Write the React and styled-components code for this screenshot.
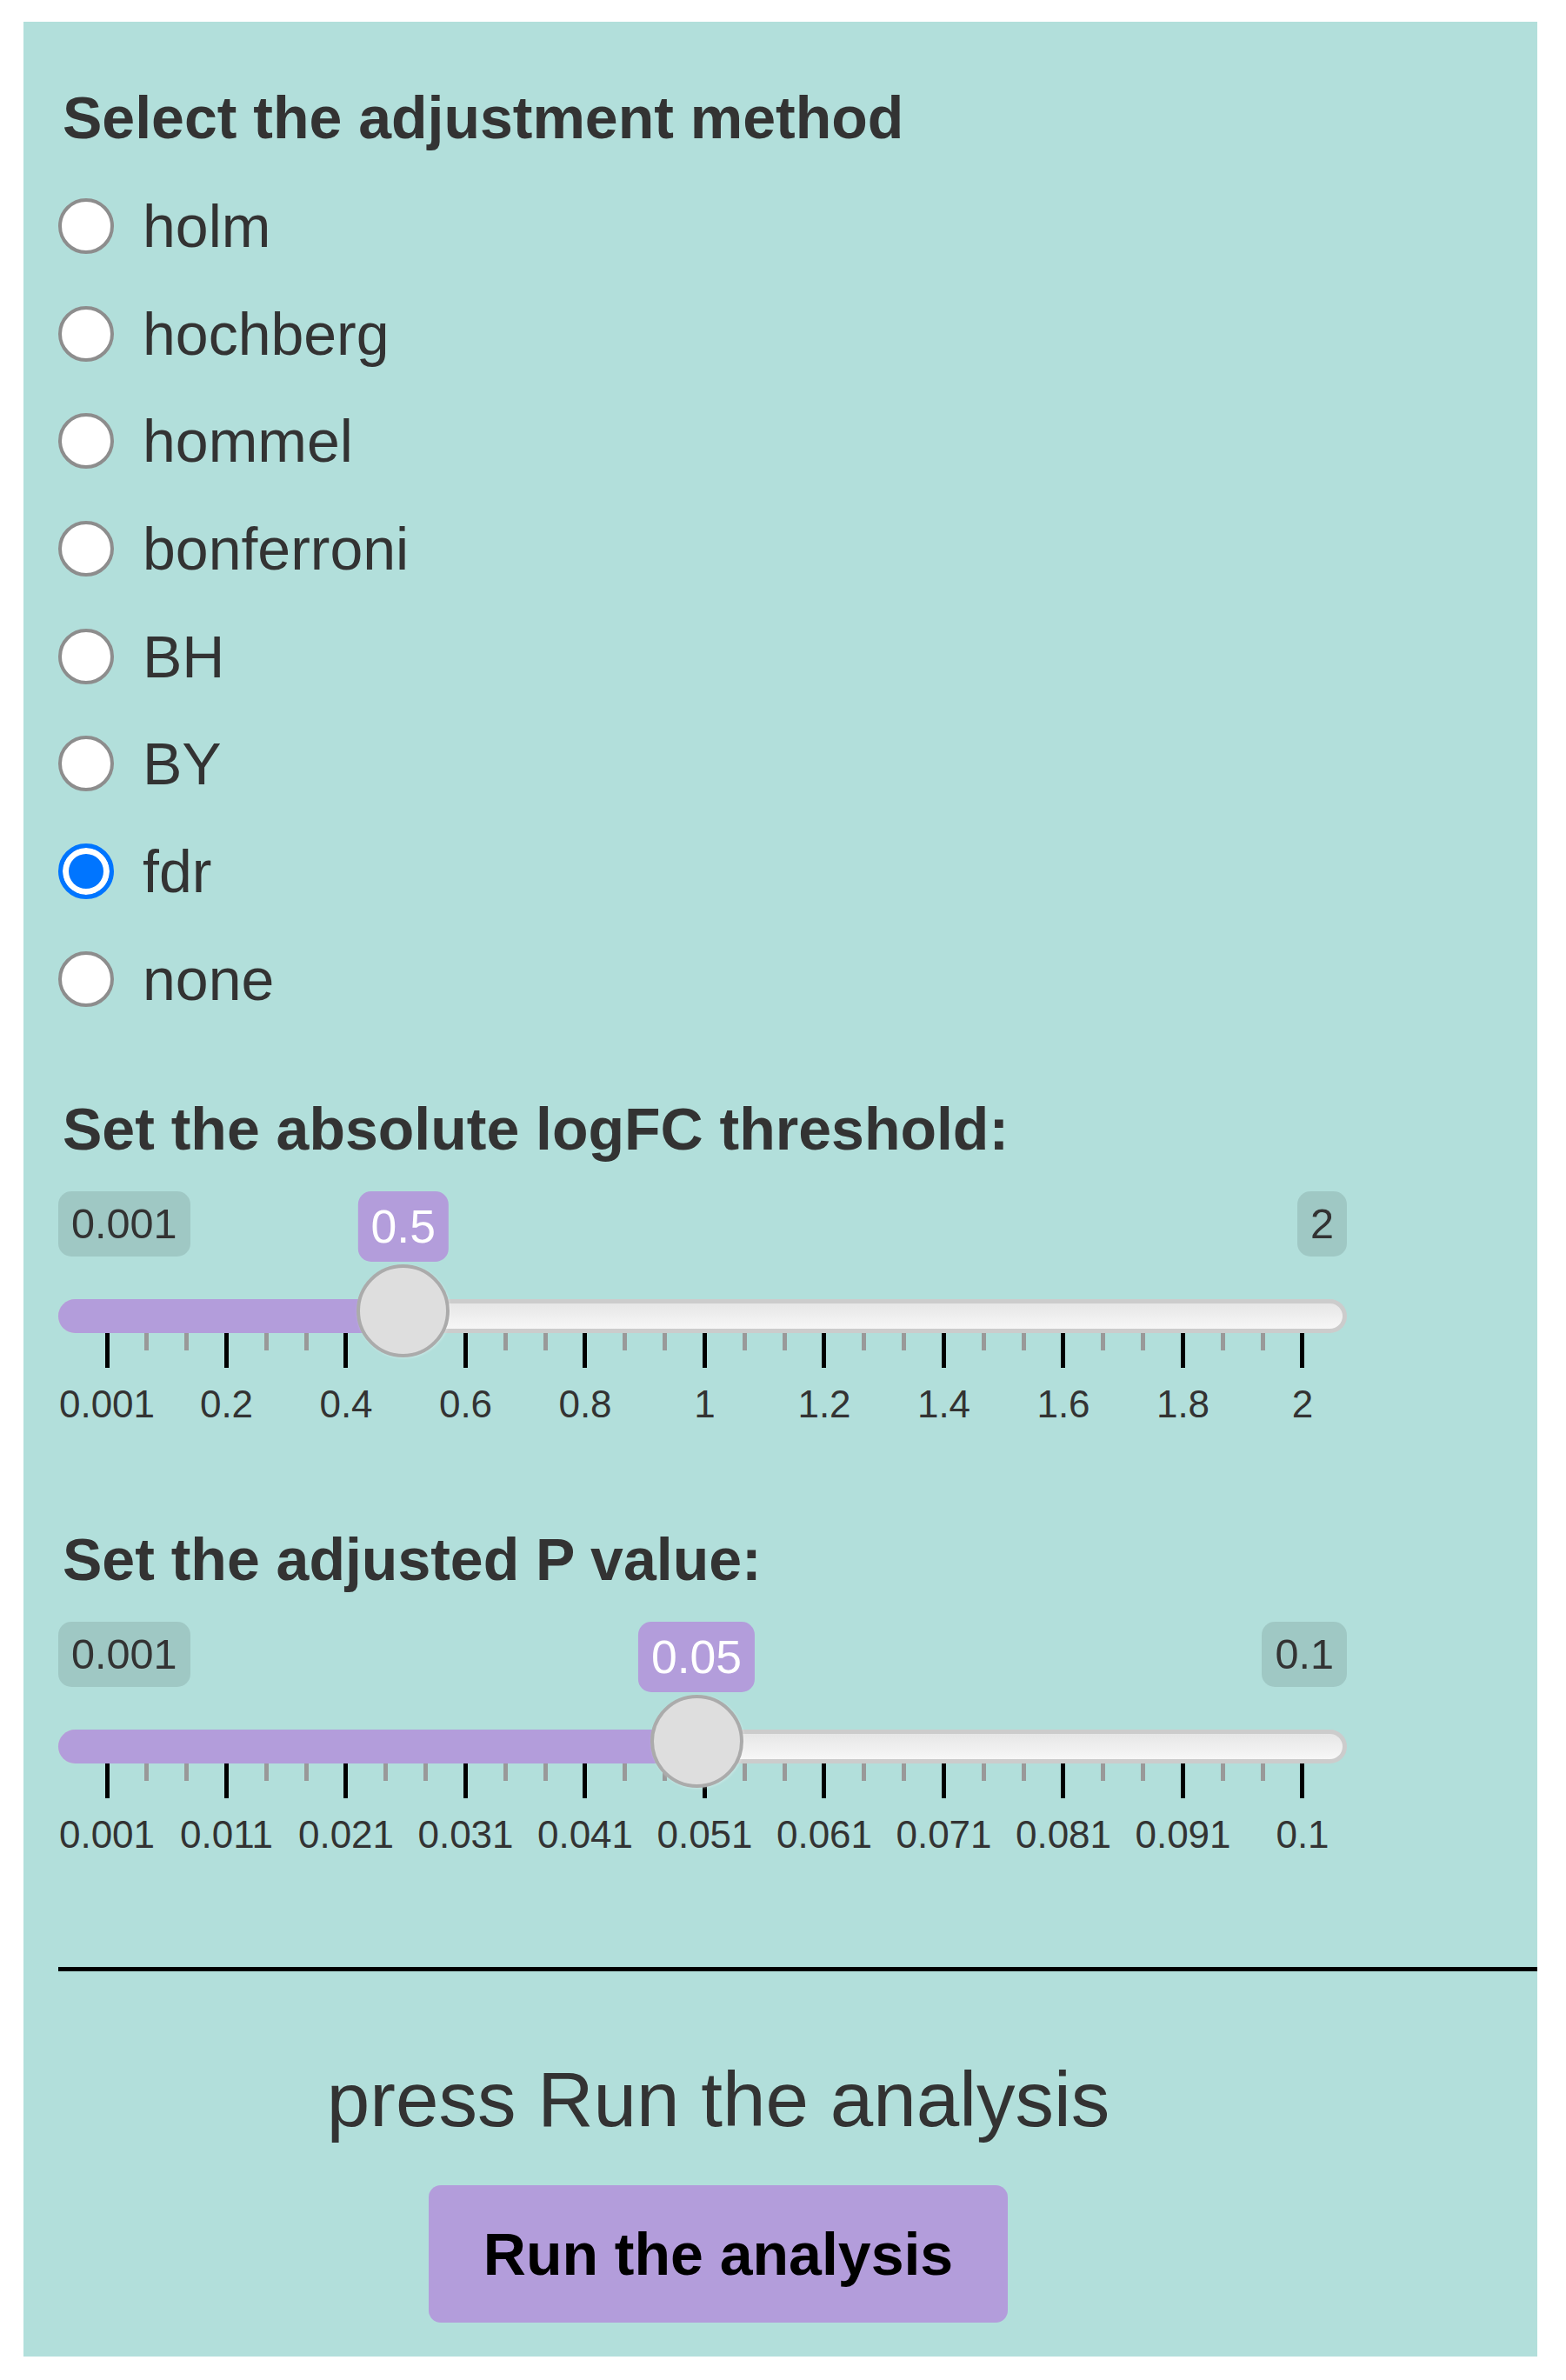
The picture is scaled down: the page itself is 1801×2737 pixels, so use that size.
import React from 'react'
import styled, { createGlobalStyle } from 'styled-components'

const GlobalStyle = createGlobalStyle`
	html, body {
		margin: 0;
		padding: 0;
		background: #fff;
	}
	body {
		font-family: 'Liberation Sans', Arial, Helvetica, sans-serif;
		color: #333;
	}
`

const Panel = styled.div`
	box-sizing: border-box;
	width: 1741px;
	min-height: 2685px;
	margin: 25px 0 0 27px;
	padding: 70px 0 39px 40px;
	background: #b2dfdb;
	display: flex;
	flex-direction: column;
`

const Heading = styled.div`
	margin: ${(p) => p.$top || 0}px 0 0 5px;
	font-size: 68px;
	line-height: 80px;
	font-weight: 700;
	color: #333;
`

const RadioList = styled.div`
	margin-top: 23px;
	display: flex;
	flex-direction: column;
`

const RadioRow = styled.label`
	display: flex;
	align-items: center;
	height: 123.7px;
	font-size: 68px;
	line-height: 124px;
	color: #333;
`

const RadioMark = styled.input`
	appearance: none;
	box-sizing: border-box;
	flex: none;
	width: 64px;
	height: 64px;
	margin: 0 33px 0 0;
	border-radius: 50%;
	border: ${(p) => (p.checked ? '5px solid #0075ff' : '4px solid #8d8d8d')};
	background: ${(p) => (p.checked ? '#0075ff' : '#fff')};
	box-shadow: ${(p) => (p.checked ? 'inset 0 0 0 7px #fff' : 'none')};
`

/* ---- slider (ion.rangeSlider look) ---- */

const SliderBox = styled.div`
	box-sizing: border-box;
	width: 1482px;
	height: 292px;
	margin-top: 32.5px;
	display: flex;
	flex-direction: column;
`

const TagRow = styled.div`
	position: relative;
	height: 81px;
	display: flex;
	justify-content: space-between;
	align-items: flex-start;
`

const EdgeTag = styled.span`
	padding: 5px 15px;
	border-radius: 15px;
	background: rgba(0, 0, 0, 0.1);
	font-size: 48.6px;
	line-height: 1.333;
	color: #333;
	white-space: nowrap;
`

const ValueTag = styled.span`
	position: absolute;
	top: 0;
	transform: translateX(-50%);
	padding: 5px 15px;
	border-radius: 15px;
	background: #b39ddb;
	color: #fff;
	font-size: 53.5px;
	line-height: 1.333;
	white-space: nowrap;
`

const TrackArea = styled.div`
	position: relative;
	padding-top: 43px;
`

const Track = styled.div`
	position: relative;
	height: 39px;
	box-sizing: border-box;
	border: 5px solid #ccc;
	border-radius: 20px;
	background: linear-gradient(to bottom, #dedede -50%, #fff 150%);
`

const Fill = styled.div`
	position: absolute;
	top: -5px;
	left: -5px;
	height: 39px;
	background: #b39ddb;
	border-radius: 20px 0 0 20px;
`

const Knob = styled.div`
	position: absolute;
	top: 3px;
	z-index: 2;
	width: 107px;
	height: 107px;
	box-sizing: border-box;
	border: 4px solid #ababab;
	border-radius: 50%;
	background: #dedede;
	box-shadow: 1px 1px 3px rgba(255, 255, 255, 0.3);
`

const TickRow = styled.div`
	height: 40px;
	padding: 0 48.5px 0 53.5px;
	display: flex;
	justify-content: space-between;
	align-items: flex-start;
`

const Tick = styled.span`
	flex: none;
	width: 5px;
	height: ${(p) => (p.$big ? 40 : 20)}px;
	background: ${(p) => (p.$big ? '#000' : '#999')};
`

const LabelRow = styled.div`
	margin: 20px 0 0 -12.75px;
	display: grid;
	grid-template-columns: repeat(11, 137.5px);
`

const TickLabel = styled.span`
	text-align: center;
	font-size: 44px;
	line-height: 44px;
	color: #333;
	white-space: nowrap;
`

/* ---- footer ---- */

const Rule = styled.hr`
	width: 100%;
	margin: 105px 0 0 0;
	height: 5px;
	border: none;
	background: #000;
`

const CenterColumn = styled.div`
	width: 1518px;
	display: flex;
	flex-direction: column;
	align-items: center;
`

const Hint = styled.div`
	margin-top: 97px;
	font-size: 89px;
	line-height: 100px;
	color: #333;
`

const RunButton = styled.button`
	margin-top: 49px;
	width: 666px;
	height: 158px;
	padding: 0;
	border: none;
	border-radius: 14px;
	background: #b39ddb;
	font-family: inherit;
	font-size: 68px;
	font-weight: 700;
	color: #000;
`

const methods = ['holm', 'hochberg', 'hommel', 'bonferroni', 'BH', 'BY', 'fdr', 'none']

const TRAVEL = 1375
const HALF = 53.5

const Slider = ({ min, max, value, label, grid }) => {
	const knobLeft = ((value - min) / (max - min)) * TRAVEL
	const ticks = []
	for (let i = 0; i <= 30; i++) ticks.push(<Tick key={i} $big={i % 3 === 0} />)

	return (
		<SliderBox>
			<TagRow>
				<EdgeTag>{grid[0]}</EdgeTag>
				<EdgeTag>{grid[grid.length - 1]}</EdgeTag>
				<ValueTag style={{ left: knobLeft + HALF }}>{label}</ValueTag>
			</TagRow>
			<TrackArea>
				<Track>
					<Fill style={{ width: knobLeft + HALF + 5 }} />
				</Track>
				<Knob style={{ left: knobLeft }} />
			</TrackArea>
			<TickRow>{ticks}</TickRow>
			<LabelRow>
				{grid.map((text) => (
					<TickLabel key={text}>{text}</TickLabel>
				))}
			</LabelRow>
		</SliderBox>
	)
}

const App = () => {
	return (
		<>
			<GlobalStyle />
			<Panel>
				<Heading>Select the adjustment method</Heading>
				<RadioList>
					{methods.map((m) => (
						<RadioRow key={m}>
							<RadioMark type='radio' name='method' checked={m === 'fdr'} readOnly />
							{m}
						</RadioRow>
					))}
				</RadioList>

				<Heading $top={70}>Set the absolute logFC threshold:</Heading>
				<Slider
					min={0.001}
					max={2}
					value={0.5}
					label='0.5'
					grid={['0.001', '0.2', '0.4', '0.6', '0.8', '1', '1.2', '1.4', '1.6', '1.8', '2']}
				/>

				<Heading $top={90.5}>Set the adjusted P value:</Heading>
				<Slider
					min={0.001}
					max={0.1}
					value={0.05}
					label='0.05'
					grid={['0.001', '0.011', '0.021', '0.031', '0.041', '0.051', '0.061', '0.071', '0.081', '0.091', '0.1']}
				/>

				<Rule />
				<CenterColumn>
					<Hint>press Run the analysis</Hint>
					<RunButton>Run the analysis</RunButton>
				</CenterColumn>
			</Panel>
		</>
	)
}

export default App
